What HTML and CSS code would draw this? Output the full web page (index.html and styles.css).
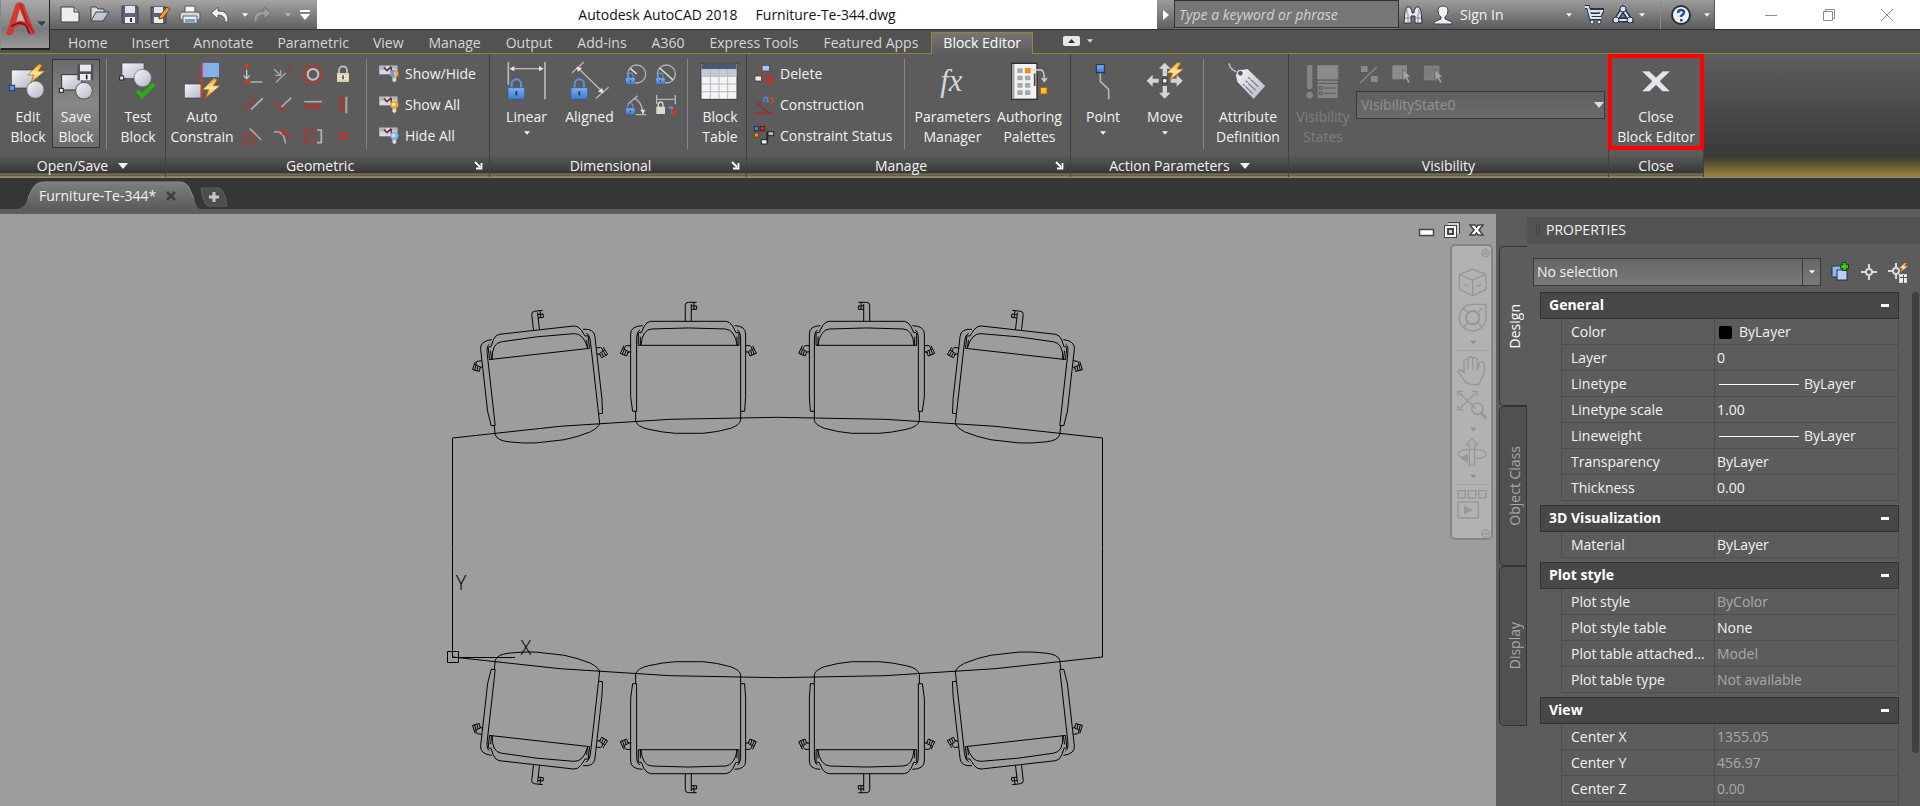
FILE: index.html
```html
<!DOCTYPE html>
<html lang="en">
<head>
<meta charset="utf-8">
<title>Autodesk AutoCAD 2018 - Furniture-Te-344.dwg</title>
<link rel="stylesheet" href="styles.css">
</head>
<body>
<svg class="defs" width="0" height="0" aria-hidden="true">
  <defs>
    <linearGradient id="steel" x1="0" y1="0" x2="1" y2="1"><stop offset="0" stop-color="#f4f5f9"/><stop offset="1" stop-color="#b4b8c6"/></linearGradient>
    <linearGradient id="fire" x1="0" y1="0" x2="0" y2="1"><stop offset="0" stop-color="#f7a51e"/><stop offset=".5" stop-color="#ffe9a0"/><stop offset="1" stop-color="#ee8a10"/></linearGradient>
    <linearGradient id="blue" x1="0" y1="0" x2="0" y2="1"><stop offset="0" stop-color="#7fb0ee"/><stop offset="1" stop-color="#3e78cc"/></linearGradient>
    <linearGradient id="tabfill" x1="0" y1="0" x2="0" y2="1"><stop offset="0" stop-color="#7e7e7e"/><stop offset="1" stop-color="#5c5c5c"/></linearGradient>
    <symbol id="bolt" viewBox="0 0 56 64"><path d="M36 2 L2 36 H20 L10 62 L54 24 H34 L46 6Z" fill="url(#fire)" stroke="#a8640e" stroke-width="2"/></symbol>
    <symbol id="lock" viewBox="0 0 54 68"><path d="M13 34V20a14 14 0 0 1 28 0V34" fill="none" stroke="#5b92dc" stroke-width="6"/><rect x="2" y="31" width="50" height="35" rx="2" fill="url(#blue)" stroke="#2c5796" stroke-width="2"/><path d="M27 42V54" stroke="#16335f" stroke-width="5"/></symbol>
    <symbol id="bulb" viewBox="0 0 30 48"><circle cx="15" cy="15" r="13" fill="currentColor"/><circle cx="13" cy="14" r="6" fill="#fff" opacity=".6"/><path d="M9 27H21V36L15 42L9 36Z" fill="#d8d8d8"/></symbol>
    <symbol id="eyecard" viewBox="0 0 66 66"><rect x="4" y="8" width="54" height="26" fill="#d5d9e3"/><path d="M4 8H24V20H4ZM40 8H58V18H48Z" fill="#aeb6c6"/><path d="M18 14l9 9 13-12M40 11v16" fill="none" stroke="#7a3038" stroke-width="5"/></symbol>
    <symbol id="launcher" viewBox="0 0 9 9"><path d="M1 1L6 6M7.500 2V7.500H2" fill="none" stroke="#fff" stroke-width="1.800"/></symbol>
    <symbol id="caret" viewBox="0 0 10 6"><path d="M0 0H10L5 6Z" fill="currentColor"/></symbol>
  </defs>
</svg>

<div class="app">
  <header class="titlebar">
    <button class="app-button" aria-label="Application menu">
      <svg width="42" height="40" viewBox="6 0 126 120"><path d="M15 103L44 12Q56 2 68 12L102 98Q94 108 86 102L74 78Q56 72 40 84L34 103Q24 108 15 103Z" fill="#d23a35"/><path d="M56 28L46 66Q58 58 72 66Z" fill="#b9b9b9"/><path d="M30 80Q58 60 76 78L86 102" fill="none" stroke="#7e1215" stroke-width="5"/><path d="M58 12L78 68L100 98" fill="none" stroke="#ab2225" stroke-width="5"/><path d="M108 64H136L122 78Z" fill="#34404f"/></svg>
    </button>
    <nav class="quick" aria-label="Quick access">
      <button class="q" aria-label="New"><svg width="22" height="22" viewBox="0 0 22 22"><path d="M2 3H15L20 8V18H2Z" fill="#eceef2" stroke="#3c3c3c"/><path d="M15 3V8H20" fill="#bfc4cc" stroke="#3c3c3c"/></svg></button>
      <button class="q" aria-label="Open"><svg width="22" height="22" viewBox="0 0 22 22"><path d="M2 17V3H7L9 5H15V8" fill="#d5dae2" stroke="#444"/><path d="M2 17L7 8H20L14 17Z" fill="#bcc7d4" stroke="#444"/></svg></button>
      <button class="q" aria-label="Save"><svg width="22" height="22" viewBox="0 0 22 22"><path d="M3 2H18L19 3V19H3Z" fill="#5a6273" stroke="#3a3e48"/><path d="M6 2H16V9H6Z" fill="#e2e5eb"/><path d="M6 13H16V19H6Z" fill="#eceef2"/><path d="M12 14V18" stroke="#333" stroke-width="2"/></svg></button>
      <button class="q" aria-label="Save as"><svg width="22" height="22" viewBox="0 0 22 22"><path d="M2 3H17V19H2Z" fill="#5a6273" stroke="#3a3e48"/><path d="M5 3H14V9H5Z" fill="#e2e5eb"/><path d="M5 13H14V19H5Z" fill="#eceef2"/><path d="M10 13L18 3L21 5L14 14L10 15Z" fill="#f09a28" stroke="#6e4312"/></svg></button>
      <button class="q" aria-label="Plot"><svg width="22" height="22" viewBox="0 0 22 22"><path d="M6 2H16V9H6Z" fill="#f5f6f8" stroke="#555"/><rect x="1" y="8" width="20" height="8" rx="2" fill="#d5d8de" stroke="#555"/><path d="M4 12H18V19H4Z" fill="#e9ebef" stroke="#666"/><path d="M6 15H16V18H6Z" fill="#6f9fdc"/></svg></button>
      <button class="q" aria-label="Undo"><svg width="22" height="22" viewBox="0 0 22 22"><path d="M2 9L9 3V7Q20 6 19 18H16Q16 11 9 11V15Z" fill="#f2f2f2" stroke="#555"/></svg></button>
      <button class="q-arrow" aria-label="Undo list"><svg width="6" height="4"><use href="#caret"/></svg></button>
      <button class="q" aria-label="Redo"><svg width="22" height="22" viewBox="0 0 22 22"><path d="M20 9L13 3V7Q2 6 3 18H6Q6 11 13 11V15Z" fill="#9c9c9c" stroke="#707070"/></svg></button>
      <button class="q-arrow dim" aria-label="Redo list"><svg width="6" height="4"><use href="#caret"/></svg></button>
      <button class="q-arrow" aria-label="Customize"><svg width="12" height="10" viewBox="0 0 12 10"><path d="M1 0H11V2H1ZM1 4H11L6 10Z" fill="#fff"/></svg></button>
    </nav>
    <div class="title"><span>Autodesk AutoCAD 2018</span><span>Furniture-Te-344.dwg</span></div>
    <div class="search">
      <button class="search-toggle" aria-label="Collapse search"><svg width="6" height="10" viewBox="0 0 6 10"><path d="M0 0L6 5L0 10Z" fill="#fff"/></svg></button>
      <input type="text" aria-label="Search" placeholder="Type a keyword or phrase">
    </div>
    <div class="info">
      <button class="i" aria-label="Search help"><svg width="20" height="20" viewBox="0 0 20 20"><path d="M1 18L2 6L4 2H7L9 6V8H11V6L13 2H16L18 6L19 18H12V11H8V18Z" fill="#e9ecf2" stroke="#2c3441"/><path d="M2 13H8M12 13H18M4 4V9M16 4V9M5 9V17M15 9V17" stroke="#7d8796"/></svg></button>
      <button class="signin"><svg width="20" height="20" viewBox="0 0 20 20"><path d="M5 6Q5 1 10 1Q15 1 15 6Q15 10 12 12V14L19 17V19H1V17L8 14V12Q5 10 5 6Z" fill="#eef0f4" stroke="#3c434f"/></svg><span>Sign In</span><svg class="end" width="6" height="4"><use href="#caret"/></svg></button>
      <button class="i cart" aria-label="App Store"><svg width="20" height="20" viewBox="0 0 20 20"><path d="M1 2H4L7 13H17M5 5H19L16 10H6" fill="none" stroke="#273348" stroke-width="4"/><path d="M1 2H4L7 13H17M5 6H18L16 10H6" fill="none" stroke="#dfe4ee" stroke-width="2"/><circle cx="8" cy="17" r="2" fill="#eee" stroke="#273348"/><circle cx="15" cy="17" r="2" fill="#eee" stroke="#273348"/></svg></button>
      <button class="i a360" aria-label="Autodesk 360"><svg width="22" height="20" viewBox="0 0 22 20"><path d="M11 4L4 15H18Z" fill="none" stroke="#26334b" stroke-width="5"/><path d="M11 4L4 15H18Z" fill="none" stroke="#dfe5f0" stroke-width="2"/><circle cx="11" cy="4" r="3" fill="#dfe5f0" stroke="#26334b"/><circle cx="4" cy="15" r="3" fill="#dfe5f0" stroke="#26334b"/><circle cx="18" cy="15" r="3" fill="#dfe5f0" stroke="#26334b"/></svg></button>
      <button class="i-arrow" aria-label="Autodesk 360 list"><svg width="6" height="4"><use href="#caret"/></svg></button>
      <button class="i help" aria-label="Help"><svg width="22" height="22" viewBox="0 0 22 22"><circle cx="11" cy="11" r="9" fill="#eef2f8" stroke="#2b2f38" stroke-width="2"/><path d="M8 9Q8 6 11 6Q14 6 14 8.500Q14 10 11 12V13" fill="none" stroke="#274f94" stroke-width="2.500"/><rect x="10" y="15" width="2.500" height="2.500" fill="#274f94"/></svg></button>
      <button class="i-arrow" aria-label="Help list"><svg width="6" height="4"><use href="#caret"/></svg></button>
    </div>
    <div class="window-buttons">
      <button aria-label="Minimize"><svg width="14" height="14"><path d="M1 7.500H13" stroke="#8b8b8b"/></svg></button>
      <button aria-label="Restore"><svg width="14" height="14"><path d="M1.500 3.500H10.500V12.500H1.500ZM3.500 3.500V1.500H12.500V10.500H10.500" fill="none" stroke="#8b8b8b"/></svg></button>
      <button aria-label="Close"><svg width="14" height="14"><path d="M1 1L13 13M13 1L1 13" stroke="#8b8b8b"/></svg></button>
    </div>
  </header>

  <nav class="tabs" aria-label="Ribbon tabs">
    <a href="#">Home</a><a href="#">Insert</a><a href="#">Annotate</a><a href="#">Parametric</a><a href="#">View</a><a href="#">Manage</a><a href="#">Output</a><a href="#">Add-ins</a><a href="#">A360</a><a href="#">Express Tools</a><a href="#">Featured Apps</a><a href="#" class="current">Block Editor</a>
    <button class="ribbon-toggle" aria-label="Minimize ribbon"><svg width="17" height="10" viewBox="0 0 17 10"><rect width="17" height="10" rx="2" fill="#e6e8ec"/><path d="M5 7H12L8.500 3Z" fill="#333"/></svg><svg width="6" height="4"><use href="#caret"/></svg></button>
  </nav>

  <section class="ribbon" aria-label="Block Editor ribbon">
    <div class="panel p-open">
      <div class="body">
        <button class="big"><svg width="40" height="40" viewBox="24 180 120 120"><rect x="34" y="210" width="66" height="54" fill="url(#steel)" stroke="#3f3f3f" stroke-width="2"/><circle cx="106" cy="269" r="26" fill="url(#steel)" stroke="#555" stroke-width="2"/><rect x="28" y="256" width="16" height="16" fill="#5d95dd" stroke="#1d3f74" stroke-width="3"/><use href="#bolt" x="82" y="190" width="54" height="62"/></svg><span>Edit<br>Block</span></button>
        <button class="big pressed"><svg width="40" height="40" viewBox="166 180 120 120"><rect x="183" y="224" width="60" height="46" fill="url(#steel)" stroke="#333" stroke-width="3"/><circle cx="250" cy="272" r="25" fill="url(#steel)" stroke="#555" stroke-width="3"/><rect x="176" y="265" width="12" height="12" fill="#eee" stroke="#222" stroke-width="3"/><rect x="230" y="193" width="48" height="48" fill="#4c515b"/><rect x="238" y="194" width="33" height="20" fill="#e6e8ec"/><rect x="238" y="222" width="32" height="19" fill="#eceef2"/><path d="M258 224V238" stroke="#222" stroke-width="5"/></svg><span>Save<br>Block</span></button>
        <i class="sep"></i>
        <button class="big"><svg width="40" height="40" viewBox="354 180 120 120"><rect x="366" y="189" width="66" height="46" fill="url(#steel)" stroke="#444" stroke-width="2"/><circle cx="428" cy="234" r="26" fill="url(#steel)" stroke="#666" stroke-width="2"/><rect x="359" y="228" width="12" height="12" fill="#eee" stroke="#222" stroke-width="3"/><path d="M412 272L426 288L462 252" fill="none" stroke="#2aae12" stroke-width="12"/></svg><span>Test<br>Block</span></button>
      </div>
      <h2>Open/Save <svg width="10" height="6"><use href="#caret"/></svg></h2>
    </div>

    <div class="panel p-geo">
      <div class="body">
        <button class="big"><svg width="40" height="40" viewBox="548 180 120 120"><rect x="608" y="187" width="52" height="46" fill="#86b0e6" stroke="#33557f" stroke-width="2"/><rect x="555" y="252" width="50" height="42" fill="url(#steel)" stroke="#444" stroke-width="2"/><path d="M607 187V294" stroke="#d8352c" stroke-width="5"/><use href="#bolt" x="608" y="232" width="56" height="66"/></svg><span>Auto<br>Constrain</span></button>
        <div class="grid four">
          <button aria-label="Coincident"><svg width="22" height="22" viewBox="727 185 66 66"><path d="M741 205V230M732 222L741 232L750 222" fill="none" stroke="#c9c9c9" stroke-width="4"/><path d="M752 242H788" stroke="#a9a9a9" stroke-width="5"/><circle cx="741" cy="194" r="7" fill="#d8352c"/><circle cx="741" cy="242" r="7" fill="#d8352c"/></svg></button>
          <button aria-label="Collinear"><svg width="22" height="22" viewBox="816 185 66 66"><path d="M828 243L858 214M822 204L840 220M842 206V222H826" fill="none" stroke="#a9a9a9" stroke-width="4"/><path d="M858 214L878 195" stroke="#b32f2a" stroke-width="4"/></svg></button>
          <button aria-label="Concentric"><svg width="22" height="22" viewBox="905 185 66 66"><circle cx="938" cy="219" r="27" fill="none" stroke="#c2322c" stroke-width="5"/><circle cx="938" cy="219" r="16" fill="none" stroke="#c4c4c4" stroke-width="6"/></svg></button>
          <button aria-label="Fix"><svg width="22" height="22" viewBox="993 185 66 66"><path d="M1014 216V207a12 12 0 0 1 24 0V216" fill="none" stroke="#c9c9c9" stroke-width="5"/><rect x="1008" y="215" width="36" height="27" fill="#d9d2a8"/><path d="M1010 224H1042M1010 232H1042" stroke="#f3efd6" stroke-width="4"/><path d="M1026 222V234" stroke="#333" stroke-width="4"/></svg></button>
          <button aria-label="Parallel"><svg width="22" height="22" viewBox="727 279 66 66"><path d="M732 326L768 292" stroke="#bd2f2a" stroke-width="5"/><path d="M754 326L789 292" stroke="#b4b4b4" stroke-width="5"/></svg></button>
          <button aria-label="Perpendicular"><svg width="22" height="22" viewBox="816 279 66 66"><path d="M842 320L874 290" stroke="#a9a9a9" stroke-width="5"/><path d="M824 302L858 335" stroke="#bd2f2a" stroke-width="5"/></svg></button>
          <button aria-label="Horizontal"><svg width="22" height="22" viewBox="905 279 66 66"><path d="M912 302H965" stroke="#a9a9a9" stroke-width="5"/><path d="M912 314H965M920 325L930 315M934 325L944 315M948 325L958 315" stroke="#bd2f2a" stroke-width="5"/></svg></button>
          <button aria-label="Vertical"><svg width="22" height="22" viewBox="993 279 66 66"><path d="M1036 287V337" stroke="#a9a9a9" stroke-width="6"/><path d="M1025 287V337M1013 300L1024 292M1013 314L1024 304M1013 330L1024 320" stroke="#bd2f2a" stroke-width="5"/></svg></button>
          <button aria-label="Tangent"><svg width="22" height="22" viewBox="727 371 66 66"><circle cx="751" cy="412" r="17" fill="none" stroke="#bd2f2a" stroke-width="5"/><path d="M750 381L785 416" stroke="#a9a9a9" stroke-width="5"/></svg></button>
          <button aria-label="Smooth"><svg width="22" height="22" viewBox="816 371 66 66"><path d="M822 392Q852 386 856 426" fill="none" stroke="#a9a9a9" stroke-width="5"/><path d="M840 380L871 411" stroke="#bd2f2a" stroke-width="4"/><rect x="846" y="388" width="12" height="12" fill="#bd2f2a"/></svg></button>
          <button aria-label="Symmetric"><svg width="22" height="22" viewBox="905 371 66 66"><path d="M928 386H916V424H928" fill="none" stroke="#bd2f2a" stroke-width="5"/><path d="M939 379V431" stroke="#bd2f2a" stroke-width="4" stroke-dasharray="14 5"/><path d="M950 386H963V424H950" fill="none" stroke="#b4b4b4" stroke-width="5"/></svg></button>
          <button aria-label="Equal"><svg width="22" height="22" viewBox="993 371 66 66"><path d="M1010 397H1043M1010 412H1043" stroke="#c2322c" stroke-width="6"/></svg></button>
        </div>
        <i class="sep"></i>
        <div class="list">
          <button><svg width="22" height="22" viewBox="0 0 66 66"><use href="#eyecard"/><g color="#f0a53a"><use href="#bulb" x="34" y="18" width="30" height="46"/></g><path d="M49 20a12 12 0 0 0 0 24Z" fill="#5f9bea"/></svg>Show/Hide</button>
          <button><svg width="22" height="22" viewBox="0 0 66 66"><use href="#eyecard"/><g color="#f2a227"><use href="#bulb" x="34" y="18" width="30" height="46"/></g></svg>Show All</button>
          <button><svg width="22" height="22" viewBox="0 0 66 66"><use href="#eyecard"/><g color="#7db4ee"><use href="#bulb" x="34" y="18" width="30" height="46"/></g></svg>Hide All</button>
        </div>
      </div>
      <h2 class="has-launch">Geometric<svg class="launch" width="9" height="9"><use href="#launcher"/></svg></h2>
    </div>

    <div class="panel p-dim">
      <div class="body">
        <button class="big mid"><svg width="40" height="40" viewBox="78 180 120 120"><path d="M82 186V254M192 186V298" stroke="#b9b9b9" stroke-width="5"/><path d="M90 206H184" stroke="#b9b9b9" stroke-width="4"/><path d="M86 206L100 198V214ZM188 206L174 198V214Z" fill="#e6e6e6"/><use href="#lock" x="79" y="232" width="54" height="68"/></svg><span>Linear</span><svg class="drop" width="6" height="4"><use href="#caret"/></svg></button>
        <button class="big mid"><svg width="40" height="40" viewBox="270 180 120 120"><path d="M276 218L312 186M348 295L386 262M296 206L366 274" stroke="#b9b9b9" stroke-width="4"/><path d="M289 200L306 204L294 215ZM371 279L354 275L366 264Z" fill="#e6e6e6"/><use href="#lock" x="271" y="232" width="54" height="68"/></svg><span>Aligned</span></button>
        <div class="grid two">
          <button aria-label="Radius"><svg width="22" height="22" viewBox="432 187 66 66"><circle cx="467" cy="220" r="27" fill="none" stroke="#b4b4b4" stroke-width="4"/><path d="M467 220L448 203" stroke="#ddd" stroke-width="5"/><use href="#lock" x="433" y="214" width="30" height="38"/></svg></button>
          <button aria-label="Diameter"><svg width="22" height="22" viewBox="522 187 66 66"><circle cx="556" cy="220" r="27" fill="none" stroke="#b4b4b4" stroke-width="4"/><path d="M536 202L576 238" stroke="#ddd" stroke-width="5"/><use href="#lock" x="523" y="214" width="30" height="38"/></svg></button>
          <button aria-label="Angular"><svg width="22" height="22" viewBox="432 281 66 66"><path d="M440 312L470 286M464 343H496M460 294Q484 304 486 340" fill="none" stroke="#b9b9b9" stroke-width="4"/><path d="M486 342L478 328H493Z" fill="#ddd"/><use href="#lock" x="433" y="306" width="30" height="38"/></svg></button>
          <button aria-label="Convert"><svg width="22" height="22" viewBox="522 281 66 66"><path d="M527 284V312M583 284V312M530 297H580" stroke="#b9b9b9" stroke-width="4"/><path d="M532 320V312a7 7 0 0 1 14 0V320" fill="none" stroke="#d9d9d9" stroke-width="4"/><rect x="526" y="319" width="26" height="22" fill="#d9d9d9"/><path d="M562 322H574V340" fill="none" stroke="#5d92d8" stroke-width="5"/><path d="M572 326H585V344H574Z" fill="#c63a2e"/></svg></button>
        </div>
        <i class="sep"></i>
        <button class="big"><svg width="40" height="40" viewBox="658 180 120 120"><rect x="661" y="190" width="108" height="108" fill="#f4f4f4" stroke="#3c3c3c" stroke-width="3"/><rect x="663" y="192" width="104" height="16" fill="#4b5872"/><rect x="663" y="208" width="104" height="20" fill="#c3c9d4"/><path d="M663 229H767M663 252H767M663 275H767M689 208V297M715 208V297M741 208V297" stroke="#b5b8be" stroke-width="3"/></svg><span>Block<br>Table</span></button>
      </div>
      <h2 class="has-launch">Dimensional<svg class="launch" width="9" height="9"><use href="#launcher"/></svg></h2>
    </div>

    <div class="panel p-manage">
      <div class="body">
        <div class="list">
          <button><svg width="22" height="22" viewBox="819 187 66 66"><rect x="846" y="194" width="22" height="17" fill="#a9c7ee" stroke="#2b3f5c" stroke-width="2"/><rect x="825" y="226" width="20" height="15" fill="#e9e9e9" stroke="#333" stroke-width="2"/><path d="M845 192V242" stroke="#b32f2a" stroke-width="4"/><path d="M858 225L879 247M879 225L858 247" stroke="#cf2a20" stroke-width="7"/></svg>Delete</button>
          <button><svg width="22" height="22" viewBox="819 279 66 66"><path d="M822 336H880M830 304L862 334" stroke="#a52c29" stroke-width="5"/><path d="M852 304V290H862V304M862 302H866" fill="none" stroke="#4f86cf" stroke-width="5"/><path d="M868 292H878V304L870 310" fill="none" stroke="#bd4a2a" stroke-width="5"/></svg>Construction</button>
          <button><svg width="22" height="22" viewBox="819 372 66 66"><rect x="823" y="377" width="13" height="12" fill="#4a85d8" stroke="#173463" stroke-width="3"/><rect x="841" y="377" width="13" height="12" fill="#d12d25" stroke="#661512" stroke-width="3"/><rect x="823" y="396" width="13" height="12" fill="#f0921e" stroke="#6e430c" stroke-width="3"/><path d="M862 392V424" stroke="#222" stroke-width="5"/><rect x="864" y="392" width="17" height="12" fill="#b8bec8" stroke="#222" stroke-width="3"/><rect x="844" y="416" width="17" height="13" fill="#eee" stroke="#222" stroke-width="3"/></svg>Constraint Status</button>
        </div>
        <i class="sep"></i>
        <button class="big wide"><svg width="40" height="40" viewBox="98 180 120 120"><text x="120" y="274" class="fx">fx</text></svg><span>Parameters<br>Manager</span></button>
        <button class="big wide"><svg width="40" height="40" viewBox="330 180 120 120"><rect x="335" y="190" width="76" height="108" fill="#f1f1f1" stroke="#2e2e2e" stroke-width="4"/><path d="M341 192V296" stroke="#9a9a9a" stroke-width="4"/><path d="M352 205h16v14h-16zM352 227h16v14h-16zM375 227h16v14h-16zM352 249h16v14h-16zM375 249h16v14h-16zM352 271h16v14h-16zM375 271h16v14h-16z" fill="#a3a7ae"/><rect x="375" y="204" width="17" height="16" fill="#f08c14"/><path d="M404 220V258" stroke="#444" stroke-width="5"/><path d="M398 210H424Q433 212 433 240M425 234L433 244L441 234" fill="none" stroke="#d6d6d6" stroke-width="4"/><rect x="421" y="262" width="20" height="20" fill="#f6bf3a" stroke="#b55b0e" stroke-width="3"/></svg><span>Authoring<br>Palettes</span></button>
      </div>
      <h2 class="has-launch">Manage<svg class="launch" width="9" height="9"><use href="#launcher"/></svg></h2>
    </div>

    <div class="panel p-action">
      <div class="body">
        <button class="big mid"><svg width="40" height="40" viewBox="550 180 120 120"><path d="M602 220V244L627 268V298" fill="none" stroke="#b4b4b4" stroke-width="5"/><rect x="590" y="194" width="24" height="24" fill="url(#blue)" stroke="#17305c" stroke-width="3"/></svg><span>Point</span><svg class="drop" width="6" height="4"><use href="#caret"/></svg></button>
        <button class="big mid"><svg width="40" height="40" viewBox="735 180 120 120"><path d="M794 188L812 206H801V228H788V206H777ZM794 296L812 278H801V258H788V278H777ZM740 242L758 224V236H776V248H758V260ZM848 242L830 224V236H812V248H830V260Z" fill="#d5d5d5"/><rect x="788" y="236" width="13" height="13" fill="#fff" stroke="#333" stroke-width="3"/><use href="#bolt" x="798" y="184" width="54" height="62"/></svg><span>Move</span><svg class="drop" width="6" height="4"><use href="#caret"/></svg></button>
        <i class="sep"></i>
        <button class="big wide"><svg width="40" height="40" viewBox="985 180 120 120"><path d="M988 190Q992 214 1022 218" fill="none" stroke="#b9b9b9" stroke-width="5"/><path d="M1008 226L1014 210L1044 206L1098 258L1062 298L1012 246Z" fill="url(#steel)" stroke="#4a4a4a" stroke-width="2"/><circle cx="1022" cy="220" r="7" fill="#555"/><path d="M1046 232L1078 262M1038 242L1069 272M1030 252L1060 282" stroke="#7d828d" stroke-width="4" stroke-dasharray="8 3 30 3"/></svg><span>Attribute<br>Definition</span></button>
      </div>
      <h2>Action Parameters <svg width="10" height="6"><use href="#caret"/></svg></h2>
    </div>

    <div class="panel p-vis">
      <div class="body">
        <button class="big wide" disabled><svg width="40" height="40" viewBox="1209 180 120 120"><rect x="1221" y="195" width="16" height="72" rx="5" fill="#848484"/><circle cx="1229" cy="286" r="10" fill="#848484"/><rect x="1253" y="197" width="60" height="40" fill="#8b8b8b" stroke="#8b8b8b" stroke-width="4" stroke-dasharray="5 3"/><rect x="1253" y="242" width="60" height="52" fill="#858585"/><path d="M1253 250H1313M1258 260h9v8h-9zM1258 276h9v8h-9zM1272 264H1307M1272 280H1307" fill="none" stroke="#585858" stroke-width="3"/></svg><span>Visibility<br>States</span></button>
        <div class="vis-tools">
          <div class="vis-icons">
            <button disabled aria-label="Visibility mode"><svg width="20" height="20" viewBox="1378 190 60 60"><path d="M1381 247L1432 198" stroke="#898989" stroke-width="4"/><rect x="1384" y="196" width="20" height="18" fill="#8b8b8b"/><rect x="1414" y="226" width="20" height="18" fill="#8b8b8b"/></svg></button>
            <button disabled aria-label="Make visible"><svg width="20" height="20" viewBox="-16 190 60 60"><rect x="-12" y="194" width="44" height="42" fill="#8b8b8b"/><path d="M20 206V240L28 233L35 248L41 245L34 230H44Z" fill="#a5a5a5" stroke="#555" stroke-width="2"/></svg></button>
            <button disabled aria-label="Make invisible"><svg width="20" height="20" viewBox="74 190 60 60"><rect x="78" y="196" width="44" height="42" fill="#7d7d7d" stroke="#8f8f8f" stroke-width="3" stroke-dasharray="4 3"/><path d="M110 206V240L118 233L125 248L131 245L124 230H134Z" fill="#a5a5a5" stroke="#555" stroke-width="2"/></svg></button>
          </div>
          <div class="select-wrap state"><select disabled aria-label="Visibility state"><option>VisibilityState0</option></select><svg width="10" height="6"><use href="#caret"/></svg></div>
        </div>
      </div>
      <h2>Visibility</h2>
    </div>

    <div class="panel p-close">
      <div class="body">
        <button class="big marked"><svg width="40" height="40" viewBox="708 180 120 120"><path d="M724 213H748L768 232L788 213H812L780 244L812 275H788L768 256L748 275H724L756 244Z" fill="#e4e6ea" stroke="#4a4d54" stroke-width="2"/></svg><span>Close<br>Block Editor</span></button>
      </div>
      <h2>Close</h2>
    </div>
    <div class="ribbon-rest"></div>
  </section>

  <nav class="files" aria-label="Open drawings">
    <div class="file-tab">
      <svg class="shape" viewBox="0 0 186 28" preserveAspectRatio="none"><path d="M0 28Q8 27 11 18L15 9Q19 1 27 1H166Q173 1 176 9L180 18Q182 27 186 28Z" fill="url(#tabfill)"/><path d="M11 18L15 9Q19 1 27 1H166Q173 1 176 9L180 18" fill="none" stroke="#8d8d8d"/></svg>
      <a href="#">Furniture-Te-344*</a>
      <button aria-label="Close drawing"><svg width="10" height="10"><path d="M1 1L9 9M9 1L1 9" stroke="#3f3f3f" stroke-width="2.500"/></svg></button>
    </div>
    <button class="new-tab" aria-label="New drawing"><svg width="28" height="20" viewBox="0 0 28 20"><path d="M1 1H19Q25 3 27 19H8Q3 17 1 1Z" fill="#4e4e4e" stroke="#626262"/><path d="M14 5V15M9 10H19" stroke="#c8c8c8" stroke-width="3"/></svg></button>
  </nav>

  <div class="work">
    <main class="canvas">
      <svg class="drawing" viewBox="0 214 1496 592" role="img" aria-label="Conference table with eight chairs">
        <defs>
          <g id="chair">
            <path d="M736 94V46Q736 37 746 37H770M754 94V42M754 48H770M754 58H770V48M762 37V58"/>
            <path d="M597 128H604L612 110Q620 95 632 94H858Q870 95 878 108L888 128H896"/>
            <path d="M603 166Q607 118 636 117L745 114L856 117Q884 119 892 166"/>
            <path d="M595 166H897M595 166V128M601 166V140M897 166V128M891 166V140"/>
            <path d="M608 107Q572 108 572 132V320L578 364H590V150Q590 124 600 120"/>
            <path d="M884 107Q917 108 917 132V320L914 364H902V150Q902 124 892 120"/>
            <path d="M587 364V392Q590 410 626 418Q670 428 706 430H790Q830 427 872 415Q900 404 902 392V364"/>
            <path d="M572 167H558Q553 171 553 178M572 185L562 188M552 167L541 190L560 198L566 184M548 176L564 184M547 193L552 180M554 196L558 182"/>
            <path d="M917 167H930Q936 171 936 178M917 185L928 188M938 167L949 190L930 198L924 184M942 176L926 184M943 193L938 180M936 196L932 182"/>
          </g>
          <g id="quarter">
            <use href="#chair" transform="translate(688.300 345.300) scale(.3333) translate(-745 -166)"/>
            <use href="#chair" transform="translate(539.200 354) rotate(-6.400) scale(.3333) translate(-745 -166)"/>
            <path d="M452.500 547.500V438L560 426.300L670 419.300L777.500 417.300"/>
          </g>
        </defs>
        <g class="ink">
          <use href="#quarter"/>
          <use href="#quarter" transform="translate(1555 0) scale(-1 1)"/>
          <use href="#quarter" transform="translate(0 1095) scale(1 -1)"/>
          <use href="#quarter" transform="translate(1555 1095) scale(-1 -1)"/>
          <path d="M447.500 651.500H458.500V662.500H447.500ZM452.500 657.500V595M452.500 657.500H515"/>
        </g>
        <text class="ucs" x="461" y="590" text-anchor="middle">Y</text>
        <text class="ucs" x="526" y="655" text-anchor="middle">X</text>
      </svg>
      <div class="doc-buttons">
        <button aria-label="Minimize drawing"><svg width="17" height="16"><rect x="1.500" y="7.500" width="14" height="6" fill="#fff" stroke="#444" stroke-width="1.500"/></svg></button>
        <button aria-label="Restore drawing"><svg width="17" height="16"><path d="M5 2H15V12" fill="none" stroke="#444" stroke-width="4"/><path d="M5 2H15V12" fill="none" stroke="#fff" stroke-width="1.500"/><rect x="3" y="5" width="9" height="9" fill="none" stroke="#444" stroke-width="4"/><rect x="3" y="5" width="9" height="9" fill="#444" stroke="#fff" stroke-width="2"/><rect x="6" y="8" width="3" height="3" fill="#ddd"/></svg></button>
        <button aria-label="Close drawing window"><svg width="17" height="16"><path d="M2 3H7L8.500 5L10 3H15L11 8L15 13H10L8.500 11L7 13H2L6 8Z" fill="#fff" stroke="#444" stroke-width="1.500"/></svg></button>
      </div>
      <div class="navbar">
        <svg width="38" height="292" viewBox="157 120 114 876" fill="none" stroke="#979797" stroke-width="4">
          <circle cx="255" cy="141" r="11"/><path d="M250 136L260 146M260 136L250 146"/>
          <path d="M176 205L216 190L256 205V250L216 269L176 250ZM176 205L216 222L256 205M216 222V269M190 235L204 241M228 241L242 235"/>
          <path d="M216 295H256V335A40 40 0 1 1 216 295Z"/><circle cx="216" cy="335" r="20" stroke-width="6"/><path d="M188 307L202 321M244 307L230 321M188 363L202 349M244 363L230 349"/>
          <path d="M208 404H228L218 414Z" fill="#8c8c8c" stroke="none"/><path d="M166 433H266" stroke-width="2"/>
          <path d="M196 530Q182 510 172 496Q176 486 190 500V464Q196 456 202 464V490V456Q209 448 216 456V490V458Q224 450 230 460V494L236 470Q246 462 250 474Q256 492 244 514L236 534Q216 540 196 530Z"/>
          <path d="M176 560L226 608M226 560L176 608M172 570V556H188M214 556H230V570M172 598V612H188"/><circle cx="230" cy="608" r="17" stroke-width="5"/><path d="M242 622L258 638" stroke-width="9"/>
          <path d="M208 665H228L218 675Z" fill="#8c8c8c" stroke="none"/>
          <path d="M206 778V716H198L214 698L230 716H222V778Z"/><path d="M196 758Q172 752 172 742Q176 730 214 730Q254 730 256 744Q254 758 226 758"/><path d="M182 756L200 746V768Z" fill="#979797"/>
          <path d="M208 806H228L218 816Z" fill="#8c8c8c" stroke="none"/><path d="M166 835H266" stroke-width="2"/>
          <path d="M172 854H194V876H172ZM203 854H225V876H203ZM234 854H256V876H234ZM172 888H233V936H172Z"/><path d="M190 898V926L216 912Z" fill="#979797" stroke="none"/>
          <circle cx="255" cy="983" r="11"/><path d="M249 983H261"/>
        </svg>
      </div>
    </main>

    <aside class="palette" aria-label="Properties">
      <div class="side-tabs">
        <a href="#" class="on"><span>Design</span></a>
        <a href="#"><span>Object Class</span></a>
        <a href="#"><span>Display</span></a>
      </div>
      <div class="palette-main">
        <h1><svg width="4" height="10" viewBox="0 0 4 10"><path d="M.500 0V10M3.500 0V10" stroke="#333" stroke-dasharray="1 1"/></svg>PROPERTIES</h1>
        <div class="picker">
          <div class="select-wrap selection"><select aria-label="Selection"><option>No selection</option></select><svg width="6" height="4"><use href="#caret"/></svg></div>
          <button aria-label="Toggle PICKADD"><svg width="20" height="20" viewBox="0 0 20 20"><rect x="2" y="4" width="10" height="11" fill="#8db8ec" stroke="#26354a"/><rect x="7" y="8" width="10" height="10" fill="#b4d0f4" stroke="#26354a"/><path d="M14.500 0V9M10 4.500H19" stroke="#113d08" stroke-width="4"/><path d="M14.500 1V8M11 4.500H18" stroke="#3ad01c" stroke-width="2.500"/></svg></button>
          <button aria-label="Select objects"><svg width="20" height="20" viewBox="0 0 20 20" fill="none" stroke="#d8d8d8" stroke-width="2"><circle cx="10" cy="10" r="3"/><path d="M10 2V7M10 13V18M2 10H7M13 10H18"/></svg></button>
          <button aria-label="Quick select"><svg width="20" height="22" viewBox="0 0 20 22" fill="none" stroke="#d8d8d8" stroke-width="2"><circle cx="8" cy="10" r="3"/><path d="M8 2V7M8 13V18M0 10H5"/><use href="#bolt" x="11" y="1" width="9" height="11" stroke="none"/><rect x="11.500" y="13.500" width="7" height="8" fill="#eee" stroke-width="1"/><path d="M12 16.500H19M15.500 14V22" stroke="#555" stroke-width="1"/></svg></button>
        </div>
        <div class="props">
          <section>
            <h3>General<i></i></h3>
            <table>
              <tr><th>Color</th><td><i class="swatch"></i>ByLayer</td></tr>
              <tr><th>Layer</th><td>0</td></tr>
              <tr><th>Linetype</th><td><i class="line"></i>ByLayer</td></tr>
              <tr><th>Linetype scale</th><td>1.00</td></tr>
              <tr><th>Lineweight</th><td><i class="line"></i>ByLayer</td></tr>
              <tr><th>Transparency</th><td>ByLayer</td></tr>
              <tr><th>Thickness</th><td>0.00</td></tr>
            </table>
          </section>
          <section>
            <h3>3D Visualization<i></i></h3>
            <table><tr><th>Material</th><td>ByLayer</td></tr></table>
          </section>
          <section>
            <h3>Plot style<i></i></h3>
            <table>
              <tr><th>Plot style</th><td class="ro">ByColor</td></tr>
              <tr><th>Plot style table</th><td>None</td></tr>
              <tr><th>Plot table attached...</th><td class="ro">Model</td></tr>
              <tr><th>Plot table type</th><td class="ro">Not available</td></tr>
            </table>
          </section>
          <section>
            <h3>View<i></i></h3>
            <table>
              <tr><th>Center X</th><td class="ro">1355.05</td></tr>
              <tr><th>Center Y</th><td class="ro">456.97</td></tr>
              <tr><th>Center Z</th><td class="ro">0.00</td></tr>
              <tr><th></th><td></td></tr>
            </table>
          </section>
          <div class="thumb"></div>
        </div>
      </div>
    </aside>
  </div>
</div>
</body>
</html>
```
FILE: styles.css
```css
* { box-sizing: border-box; }
html, body { margin: 0; height: 100%; }
body { font: 14px/20px "Open Sans", "Noto Sans", sans-serif; color: #f2f2f2; background: #5c5c5c; overflow: hidden; }
button { margin: 0; padding: 0; border: 0; background: none; color: inherit; font: inherit; }
a { color: inherit; text-decoration: none; }
svg { display: block; flex: none; }
h1, h2, h3 { margin: 0; font: inherit; }
.defs { position: absolute; }
.app { display: flex; flex-direction: column; height: 100vh; position: relative; }

/* title bar */
.titlebar { display: flex; height: 30px; background: #fff; border-bottom: 1px solid #333; }
.app-button { position: absolute; z-index: 2; left: 0; top: 0; width: 50px; height: 50px; padding: 0 0 8px 2px; background: linear-gradient(#a8a8a8, #878787 50%, #7a7a7a 60%, #9a9a9a); border: 1px solid #222; border-left-color: #888; border-top: 0; border-bottom-width: 2px; }
.quick { display: flex; align-items: center; width: 317px; padding-left: 59px; background: linear-gradient(#a4a4a4, #5f5f5f); }
.q { width: 30px; display: flex; justify-content: center; padding-right: 8px; }
.q-arrow { width: 13px; display: flex; justify-content: center; color: #fff; }
.q-arrow:last-child { width: 24px; }
.dim { color: #bdbdbd; }
.title { flex: 1; display: flex; align-items: center; justify-content: center; gap: 18px; color: #111; white-space: nowrap; }
.search { display: flex; background: #777; }
.search-toggle { width: 17px; display: flex; align-items: center; justify-content: center; background: linear-gradient(#9c9c9c, #5f5f5f); }
.search input { width: 225px; height: 28px; padding: 0 4px; border: 1px solid #333; background: #767676; color: #fff; font: italic 14px "Open Sans", sans-serif; }
.search input::placeholder { color: #d2d2d2; opacity: 1; }
.info { display: flex; align-items: center; width: 316px; background: linear-gradient(#9c9c9c, #5b5b5b); border-right: 1px solid #555; }
.i { width: 28px; display: flex; justify-content: center; }
.signin { display: flex; align-items: center; gap: 7px; width: 145px; padding-left: 6px; }
.end { margin-left: auto; }
.cart { width: 39px; padding: 0 3px 0 8px; }
.a360 { width: 24px; }
.i-arrow { width: 14px; height: 28px; display: flex; align-items: center; justify-content: center; }
.help { width: 40px; height: 28px; align-items: center; margin-left: 11px; border-left: 1px solid #888; }
.window-buttons { display: flex; padding: 0 4px 0 27px; }
.window-buttons button { width: 58px; display: flex; align-items: center; justify-content: center; }

/* ribbon tabs */
.tabs { display: flex; height: 23px; padding: 2px 0 0 56px; background: #525252; color: #d6d6d6; white-space: nowrap; }
.tabs a { padding: 1px 12px 0; }
.tabs a:nth-child(n+6) { margin-left: 1px; }
.tabs a.current { position: relative; padding: 0 11px; height: 22px; margin-bottom: -1px; color: #fff; border: 1px solid #97803a; border-bottom: 0; background: linear-gradient(#757575, #5c5c5c); }
.ribbon-toggle { display: flex; align-items: center; gap: 7px; margin-left: 30px; height: 18px; }

/* ribbon */
.ribbon { display: flex; height: 125px; border-top: 1px solid #97803a; border-bottom: 1px solid #8a8a8a; background: #5c5c5c; }
.panel { display: flex; flex-direction: column; flex: none; border-right: 1px solid #424242; }
.body { display: flex; flex: 1; }
.panel h2 { position: relative; display: flex; align-items: center; justify-content: center; gap: 10px; height: 22px; line-height: 20px; border-bottom: 1px solid #97803a; background: linear-gradient(#5c5c5c, #383838 17px, #383838 18px, #97803a 19px, #5c5c5c 20px); white-space: nowrap; }
.panel h2.has-launch { padding-right: 15px; }
.launch { position: absolute; right: 6px; top: 6px; }
.big { display: flex; flex-direction: column; align-items: center; flex: none; width: 48px; height: 89px; margin-top: 5px; padding-top: 1px; white-space: nowrap; line-height: 20px; }
.big span { padding-top: 7px; }
.big .drop { margin-top: 4px; }
.big:disabled { color: #7f7f7f; }
.pressed { border: 1px solid #353535; background: linear-gradient(#6a6a6a, #888 50%, #6c6c6c); padding-top: 0; }
.sep { flex: none; width: 1px; height: 90px; margin-top: 5px; background: #858585; }
.grid { display: grid; grid-auto-rows: 31px; padding-top: 4px; align-content: start; }
.four { grid-template-columns: repeat(4, 30px); }
.two { grid-template-columns: repeat(2, 30px); }
.grid button { display: flex; align-items: center; justify-content: center; }
.list { display: flex; flex-direction: column; padding-top: 4px; white-space: nowrap; }
.list button { display: flex; align-items: center; gap: 5px; height: 31px; text-align: left; }
.p-open { width: 166px; } .p-open .body { padding-left: 4px; } .p-open .sep { margin-left: 6px; margin-right: 7px; }
.p-geo { width: 324px; } .p-geo .big { width: 72px; } .p-geo .sep { margin-left: 8px; margin-right: 11px; }
.p-dim { width: 257px; } .p-dim .body { padding-left: 5px; } .p-dim .mid { width: 63px; } .p-dim .sep { margin-left: 6px; margin-right: 8px; }
.p-manage { width: 324px; } .p-manage .list { width: 151px; } .p-manage .body { padding-left: 6px; } .p-manage .sep { margin-right: 9px; } .p-manage .big { width: 77px; }
.p-action { width: 218px; } .p-action .mid { width: 62px; } .p-action .body { padding-left: 1px; } .p-action .sep { margin: 5px 8px 0 7px; } .p-action .wide { width: 72px; }
.p-vis { width: 320px; } .p-vis .body { padding-left: 2px; } .p-vis .big { width: 64px; }
.p-close { width: 95px; } .p-close .big { width: 94px; }
.marked { position: relative; }
.marked::after { content: ""; position: absolute; inset: -5px -1px -2px -1px; border: 4px solid #f00; }
.vis-tools { flex: 1; padding: 10px 3px 0 1px; }
.vis-icons { display: flex; gap: 12px; padding-left: 3px; margin-bottom: 7px; }
.select-wrap { position: relative; }
.select-wrap select { appearance: none; width: 100%; height: 100%; margin: 0; border: 1px solid #3a3a3a; border-radius: 0; font: inherit; color: inherit; }
.select-wrap svg { position: absolute; pointer-events: none; }
.state { height: 28px; color: #929292; }
.state select { padding: 0 4px; opacity: 1; background: linear-gradient(#5f5f5f, #6b6b6b); }
.state svg { right: 1px; top: 11px; color: #ddd; }
.ribbon-rest { flex: 1; background: linear-gradient(#5e5e5e, #3a3a3a 100px, #3f3c33 104px, #97803a 121px); }

/* drawing tabs */
.files { display: flex; align-items: flex-end; height: 31px; padding-left: 17px; background: #363636; }
.file-tab { position: relative; display: flex; align-items: center; width: 183px; height: 28px; padding: 2px 0 0 22px; }
.file-tab .shape { position: absolute; inset: 0; width: 100%; height: 100%; }
.file-tab a, .file-tab button { position: relative; }
.file-tab button { margin-left: 10px; }
.new-tab { margin-bottom: 2px; }

/* work area */
.work { display: flex; flex: 1; min-height: 0; border-top: 5px solid #5c5c5c; }
.canvas { position: relative; flex: 1; min-width: 0; background: #9d9d9d; }
.drawing { width: 100%; height: 100%; }
.ink { fill: none; stroke: #000; }
.ink path, #chair path { vector-effect: non-scaling-stroke; }
.ucs { font: 300 20px "Open Sans", sans-serif; fill: #000; }
.fx { font: italic 92px "Liberation Serif", serif; fill: #d6d6d6; }
.doc-buttons { position: absolute; right: 11px; top: 8px; display: flex; gap: 8px; }
.navbar { position: absolute; right: 3px; top: 30px; width: 43px; padding: 0 0 0 1px; border: 2px solid #858585; border-radius: 5px; background: #b2b2b2; }
.palette { display: flex; width: 424px; flex: none; background: #5c5c5c; }
.side-tabs { width: 31px; padding: 32px 0 0 3px; }
.side-tabs a { display: flex; align-items: center; justify-content: center; height: 160px; padding-left: 3px; border: 1px solid #333; border-radius: 5px 0 0 5px; background: #505050; color: #a8a8a8; }
.side-tabs a.on { background: #5c5c5c; color: #fff; border-right: 0; }
.side-tabs span { writing-mode: vertical-rl; transform: rotate(180deg); }
.palette-main { flex: 1; display: flex; flex-direction: column; min-width: 0; }
.palette-main h1 { display: flex; align-items: center; gap: 6px; height: 27px; margin-top: 3px; padding: 0 0 2px 9px; background: #525252; border-radius: 4px 0 0 0; }
.picker { display: flex; align-items: center; gap: 9px; padding: 14px 12px 6px 6px; }
.selection { flex: 1; height: 28px; }
.selection select { padding: 0 3px; background: linear-gradient(#666, #7a7a7a); }
.selection::after { content: ""; position: absolute; right: 18px; top: 1px; bottom: 1px; width: 1px; background: #3a3a3a; }
.selection svg { right: 6px; top: 12px; }
.props { position: relative; flex: 1; min-height: 0; overflow: hidden; padding: 0 21px 0 13px; }
.props section { margin-bottom: 4px; }
.props h3 { display: flex; align-items: center; justify-content: space-between; height: 27px; padding: 0 9px 1px 8px; border: 1px solid #333; background: #484848; font-weight: 700; color: #fff; }
.props h3 i { width: 8px; height: 3px; background: #fff; }
.props table { width: calc(100% - 21px); margin-left: 21px; border-collapse: separate; border-spacing: 0; table-layout: fixed; border-right: 1px solid #4e4e4e; }
.props th, .props td { height: 26px; padding: 0 0 0 2px; border-left: 1px solid #4e4e4e; border-bottom: 1px solid #4e4e4e; font-weight: 400; text-align: left; white-space: nowrap; }
.props th { width: 153px; padding-left: 9px; }
.ro { color: #a9a9a9; }
.swatch { display: inline-block; width: 13px; height: 13px; margin: 0 7px 0 2px; border-radius: 2px; background: #000; vertical-align: -2px; }
.line { display: inline-block; width: 80px; height: 1px; margin: 0 5px 0 2px; background: #fff; vertical-align: 4px; }
.thumb { position: absolute; right: 1px; top: 0; width: 7px; height: 461px; border-radius: 4px; background: #404040; }
```
